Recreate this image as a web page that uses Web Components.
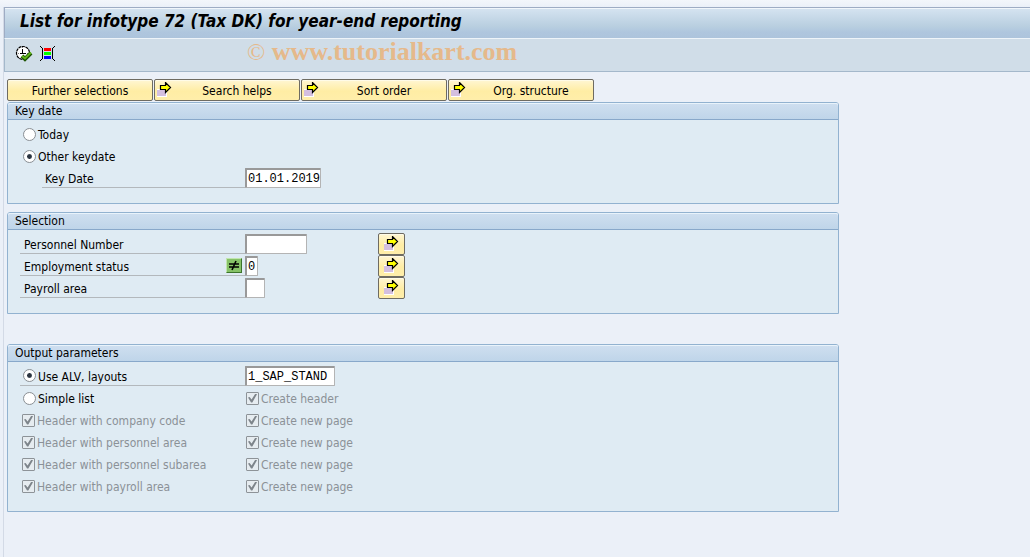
<!DOCTYPE html>
<html lang="en">
<head>
<meta charset="utf-8">
<title>List for infotype 72 (Tax DK) for year-end reporting</title>
<style>
  html { min-height: 100%; background: #ebf0f8; }
  body { margin: 0; color: #000; font: 12px/16px "DejaVu Sans Condensed", "DejaVu Sans", sans-serif; font-stretch: condensed; }
</style>
</head>
<body>
<report-screen></report-screen>

<template id="report-screen">
  <style>
    :host { display: block; min-height: 100vh; box-sizing: border-box; padding: 7px 0 0 3px; background: linear-gradient(#f3f6fb, #ebf0f8 7px); }
    main { border-left: 1px solid #d3dae6; min-height: calc(100vh - 7px); box-sizing: border-box; }
    .content { padding: 7px 3px; max-width: 832px; }
    nav { display: flex; gap: 1px; margin-bottom: 1px; }
    selection-panel { margin: 8px 0 30px; }
  </style>
  <main>
    <title-bar>List for infotype 72 (Tax DK) for year-end reporting</title-bar>
    <tool-bar></tool-bar>
    <div class="content">
      <nav>
        <push-button>Further selections</push-button>
        <push-button icon>Search helps</push-button>
        <push-button icon>Sort order</push-button>
        <push-button icon>Org. structure</push-button>
      </nav>
      <key-date-panel></key-date-panel>
      <selection-panel></selection-panel>
      <output-panel></output-panel>
    </div>
  </main>
</template>

<template id="title-bar">
  <style>
    :host { display: block; border: solid #9eacc4; border-width: 1px 0 0 1px; box-shadow: inset 0 1px #f1f6fb; background: linear-gradient(#d6e4f1, #b9cfe0 60%, #afc6de 80%, #adc4dc); }
    h1 { margin: 0; padding: 1px 15px 5px; font-size: 17px; line-height: 24px; font-weight: bold; font-style: italic; }
  </style>
  <h1><slot></slot></h1>
</template>

<template id="tool-bar">
  <style>
    :host { display: flex; align-items: center; height: 32px; border: solid #a4b8cb; border-width: 0 0 1px 1px; border-top: 1px solid #eef4f9; background: #d0dde8; padding-left: 7px; }
    button { border: 0; padding: 0 0 2px; background: none; width: 24px; height: 24px; display: grid; place-items: center; }
    svg { display: block; }
    p { margin: 0 0 6px 187px; color: #e5b98b; font: bold 26px/28px "Liberation Serif", serif; white-space: nowrap; }
    span { font-weight: normal; font-size: 24px; }
  </style>
  <button type="button" aria-label="Execute">
    <svg width="18" height="18" viewBox="0 0 18 18">
      <circle cx="8" cy="8" r="6.5" fill="#fff" stroke="#000" stroke-width="1.2" stroke-dasharray="3 .6"/>
      <path d="M7.500 4v5M5 8.500h6" fill="none" stroke="#000"/>
      <path d="M7 2.500h1M3 8.500h1M12 8.500h1" stroke="#777"/>
      <path d="M7 11l3 3 6-6" fill="none" stroke="#1c5200" stroke-width="4"/>
      <path d="M7 11l3 2.500 6-6" fill="none" stroke="#62b51a" stroke-width="2"/>
    </svg>
  </button>
  <button type="button" aria-label="Color legend">
    <svg width="16" height="16" viewBox="0 0 16 16" shape-rendering="crispEdges">
      <path d="M4 2h7v3H4z" fill="#f00"/><path d="M4 6h7v3H4z" fill="#0f0"/><path d="M4 10h7v3H4z" fill="#00f"/>
      <path d="M0 0h1v1H0zM1 1h1v1H1zM2 2h1v11H2zM1 13h1v1H1zM0 14h1v1H0zM14 0h1v1h-1zM13 1h1v1h-1zM12 2h1v11h-1zM13 13h1v1h-1zM14 14h1v1h-1z"/>
    </svg>
  </button>
  <p><span>©</span> www.tutorialkart.com</p>
</template>

<template id="arrow-icon">
  <style>:host { display: block; flex: none; } svg { display: block; }</style>
  <svg width="15" height="15" viewBox="0 0 15 15">
    <path d="M0 7h10v8H0z" fill="#fff"/><path d="M0 8h9v6H0z" fill="#d4bfdf"/>
    <path d="M3.500 3.500h5v-3l5 5-5 5v-3h-5z" fill="#ff0" stroke="#000" stroke-width="1.200"/>
  </svg>
</template>

<template id="push-button">
  <style>
    :host { display: block; flex: 0 1 146px; }
    :host([small]) { flex: none; width: 27px; }
    button { display: flex; width: 100%; height: 22px; box-sizing: border-box; padding: 0 2px; align-items: center; font: inherit; color: #000; border: 1px solid #6e6b62; border-radius: 2px; background: linear-gradient(#fff6d3, #ffeda4 55%, #ffeeaa); box-shadow: inset 0 1px #fffbe8; }
    .text { flex: 1; white-space: nowrap; text-align: center; padding-top: 1px; }
    arrow-icon { display: none; margin: 0 5px 2px 0; }
    :host([icon]) arrow-icon { display: block; }
    :host([small]) .text { display: none; }
    :host([small]) button { justify-content: center; }
    :host([small]) arrow-icon { margin: 0 0 2px; }
  </style>
  <button type="button"><arrow-icon></arrow-icon><span class="text"><slot></slot></span></button>
</template>

<template id="group-box">
  <style>
    :host { display: block; border: 1px solid #92b2d0; border-radius: 3px 3px 0 0; background: #dfebf3; }
    h2 { margin: 0; padding: 0 7px; font-size: 12px; line-height: 16px; font-weight: normal; border-bottom: 1px solid #88a8ca; border-radius: 2px 2px 0 0; background: linear-gradient(#cfdff0, #bfd5e9); box-shadow: inset 0 1px #e9f3fb; }
    .body { padding: 3px 12px 14px; }
  </style>
  <h2><slot name="heading"></slot></h2>
  <div class="body"><slot></slot></div>
</template>

<template id="form-styles">
  <style>
    :host { display: block; }
    .row { display: grid; grid-template-columns: 225px 133px 1fr; height: 22px; align-items: center; }
    .cell { display: flex; align-items: center; justify-content: space-between; height: 20px; box-sizing: border-box; }
    .line { border-bottom: 1px solid #b3b8bc; }
    .indent { margin-left: 22px; }
    .name { padding: 2px 0 0 4px; }
    .indent .name { padding-left: 3px; }
    label { display: flex; align-items: center; gap: 2px; white-space: nowrap; }
    label span { padding-top: 2px; }
    .choice { margin-left: 2px; }
    label.second { margin-left: 1px; }
    .off { color: #8b9197; }
    input { appearance: none; margin: 0; box-sizing: border-box; flex: none; }
    [type=text] { height: 20px; padding: 0 0 0 1px; border: 2px solid #b4b4b4; border-width: 2px 1px 1px 2px; border-color: #999 #b4b4b4 #b4b4b4 #999; border-radius: 1px; background: #fff; color: #000; font: 12px/16px "Liberation Mono", monospace; }
    .w1 { width: 13px; } .w2 { width: 20px; } .w8 { width: 62px; } .w10 { width: 76px; } .w12 { width: 90px; }
    [type=radio] { width: 13px; height: 13px; border: 1px solid #8a8f94; border-radius: 50%; background: #fff; margin-left: 1px; }
    [type=radio]:checked { background: radial-gradient(#2b3440 0 2px, #46505c 2px, #fff 3px); }
    [type=checkbox] { width: 13px; height: 13px; border: 1px solid #8d9398; border-radius: 1px; background: #e6ecf0; display: grid; place-items: center; }
    [type=checkbox]:checked::after { content: ""; width: 9px; height: 9px; background: #7e858b; clip-path: polygon(0 45%, 18% 38%, 40% 68%, 82% 0, 100% 8%, 48% 100%, 34% 100%); }
    .ne { border: 1px solid; border-color: #c1e5ae #3c742c #3c742c #c1e5ae; background: #86c267; width: 16px; height: 15px; padding: 0; margin-right: 3px; display: grid; place-items: center; }
  </style>
</template>

<template id="key-date-panel">
  <group-box>
    <span slot="heading">Key date</span>
    <div class="row"><label class="choice"><input type="radio" name="date"><span>Today</span></label></div>
    <div class="row"><label class="choice"><input type="radio" name="date" checked><span>Other keydate</span></label></div>
    <div class="row"><div class="cell line indent"><label class="name" for="date">Key Date</label></div><input type="text" class="w10" id="date" value="01.01.2019"></div>
  </group-box>
</template>

<template id="selection-panel">
  <group-box>
    <span slot="heading">Selection</span>
    <div class="row"><div class="cell line"><label class="name" for="pernr">Personnel Number</label></div><input type="text" class="w8" id="pernr"><push-button icon small></push-button></div>
    <div class="row"><div class="cell line"><label class="name" for="status">Employment status</label>
      <button class="ne" type="button" aria-label="Not equal"><svg width="12" height="11" viewBox="0 0 12 11"><path d="M1 4h10M1 7h10M8 1L4 10" fill="none" stroke="#000" stroke-width="1.600"/></svg></button></div>
      <input type="text" class="w1" id="status" value="0"><push-button icon small></push-button></div>
    <div class="row"><div class="cell line"><label class="name" for="payroll">Payroll area</label></div><input type="text" class="w2" id="payroll"><push-button icon small></push-button></div>
  </group-box>
</template>

<template id="output-panel">
  <group-box>
    <span slot="heading">Output parameters</span>
    <div class="row"><div class="cell line"><label class="choice"><input type="radio" name="out" checked><span>Use ALV, layouts</span></label></div><input type="text" class="w12" aria-label="Layout" value="1_SAP_STAND"></div>
    <div class="row"><label class="choice"><input type="radio" name="out"><span>Simple list</span></label><label class="off second"><input type="checkbox" checked disabled><span>Create header</span></label></div>
    <div class="row off"><label class="choice"><input type="checkbox" checked disabled><span>Header with company code</span></label><label class="second"><input type="checkbox" checked disabled><span>Create new page</span></label></div>
    <div class="row off"><label class="choice"><input type="checkbox" checked disabled><span>Header with personnel area</span></label><label class="second"><input type="checkbox" checked disabled><span>Create new page</span></label></div>
    <div class="row off"><label class="choice"><input type="checkbox" checked disabled><span>Header with personnel subarea</span></label><label class="second"><input type="checkbox" checked disabled><span>Create new page</span></label></div>
    <div class="row off"><label class="choice"><input type="checkbox" checked disabled><span>Header with payroll area</span></label><label class="second"><input type="checkbox" checked disabled><span>Create new page</span></label></div>
  </group-box>
</template>

<script>
  const copy = id => document.getElementById(id).content.cloneNode(true);
  const define = (name, ...shared) => customElements.define(name, class extends HTMLElement {
    constructor() {
      super();
      this.attachShadow({ mode: "open" }).append(...[...shared, name].map(copy));
    }
    connectedCallback() {
      if (this.hasAttribute("small")) this.shadowRoot.querySelector("button").setAttribute("aria-label", "Multiple selection");
    }
  });
  ["arrow-icon", "push-button", "group-box", "title-bar", "tool-bar"].forEach(n => define(n));
  ["key-date-panel", "selection-panel", "output-panel"].forEach(n => define(n, "form-styles"));
  define("report-screen");
</script>
</body>
</html>
